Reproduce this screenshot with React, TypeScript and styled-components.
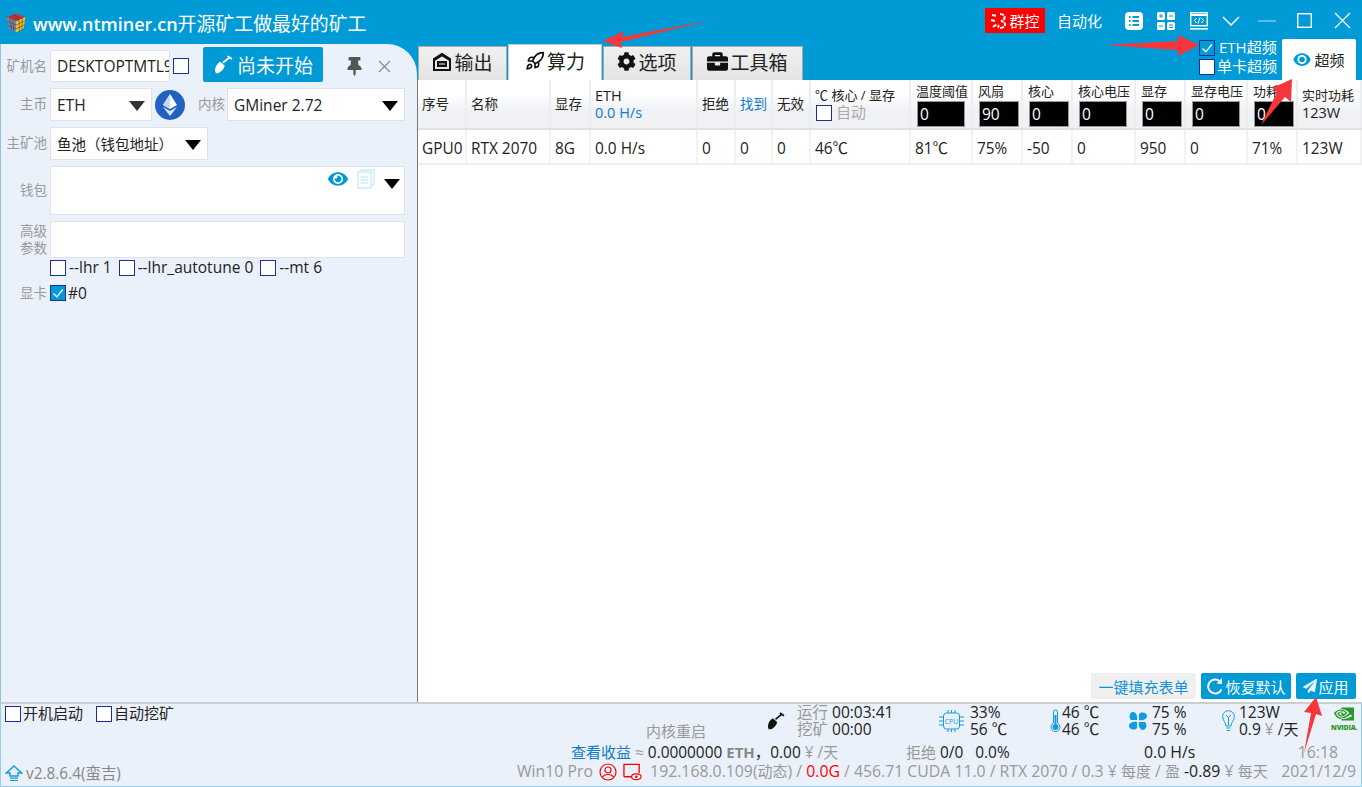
import React from "react"
import styled, { createGlobalStyle } from "styled-components"
import { FaBriefcase, FaCog, FaEye, FaPaperPlane, FaThumbtack } from "react-icons/fa"
import { SiNvidia } from "react-icons/si"
import { LuRocket } from "react-icons/lu"

const blue = "#009ad6"
const panel = "#eaf1fa"
const COLS = "49px 84px 40px 107px 38px 37px 38px 100px 62px 50px 50px 63px 50px 62px 50px 64px"

const Global = createGlobalStyle`
    html, body { margin: 0; padding: 0; height: 100%; overflow: hidden; }
    body { font-family: "Open Sans", "Noto Sans CJK SC", sans-serif; font-size: 14px; color: #222; }
    * { box-sizing: border-box; }
`

const Window = styled.div`
    position: relative;
    width: 1362px;
    height: 787px;
    background: ${blue};
    display: flex;
    flex-direction: column;
    overflow: hidden;
`

const TitleBar = styled.div`
    height: 44px;
    flex: none;
    display: flex;
    align-items: center;
    padding: 2px 11px 0 6px;
    color: #fff;
`

const Title = styled.div`
    margin-left: 7px;
    font-size: 18.9px;
    white-space: nowrap;
    b { font-weight: 600; font-size: 18px; }
`

const TitleTools = styled.div`
    margin-left: auto;
    display: flex;
    align-items: center;
    margin-top: -5px;
`

const GroupBtn = styled.div`
    width: 60px;
    height: 25px;
    background: #ff0000;
    font-size: 15px;
    display: flex;
    align-items: center;
    justify-content: center;
    gap: 1px;
`

const AutoLabel = styled.div`
    margin: 0 23px 0 12px;
    font-size: 15px;
`

const ToolIcon = styled.svg<{ $gap?: number }>`
    display: block;
    margin-right: ${p => p.$gap ?? 0}px;
    flex: none;
`

const Main = styled.div`
    flex: 1;
    display: flex;
    min-height: 0;
`

const Side = styled.div`
    width: 417px;
    flex: none;
    background: ${panel};
    border-top-right-radius: 30px;
    border-left: 1px solid #8fc4e0;
    padding: 4px 12px 0 0;
    display: flex;
    flex-direction: column;
`

const FormRow = styled.div<{ $top?: number }>`
    display: flex;
    align-items: center;
    margin-top: ${p => p.$top ?? 6}px;
`

const Label = styled.div`
    width: 46px;
    flex: none;
    margin-right: 3px;
    text-align: right;
    color: #999;
    font-size: 13.5px;
    line-height: 17px;
`

const InlineLabel = styled(Label)`
    width: 28px;
    margin: 0 2px 0 12px;
`

const Field = styled.div<{ $w?: number; $h?: number; $cjk?: boolean }>`
    position: relative;
    width: ${p => (p.$w ? `${p.$w}px` : "auto")};
    flex: ${p => (p.$w ? "none" : 1)};
    height: ${p => p.$h ?? 33}px;
    background: #fff;
    border: 1px solid #dfe3e8;
    display: flex;
    align-items: center;
    padding-left: 6px;
    font-size: ${p => (p.$cjk ? 14.5 : 15.5)}px;
    white-space: nowrap;
    overflow: hidden;
`

const Caret = styled.span<{ $gray?: boolean }>`
    position: absolute;
    right: 6px;
    top: 50%;
    margin-top: -4px;
    width: 0;
    height: 0;
    border-left: 8px solid transparent;
    border-right: 8px solid transparent;
    border-top: 10px solid ${p => (p.$gray ? "#333" : "#000")};
`

const Box = styled.span<{ $on?: boolean }>`
    width: 16px;
    height: 16px;
    flex: none;
    display: inline-flex;
    align-items: center;
    justify-content: center;
    background: ${p => (p.$on ? blue : "#fff")};
    border: 1px solid #1c2f9c;
`

const NameBox = styled(Box)`
    margin-left: 3px;
`

const Check = ({ on }: { on?: boolean }) => (
    <Box $on={on}>
        {on && (
            <svg width="12" height="12" viewBox="0 0 12 12">
                <path d="M1.5 6.5 L4.8 9.8 L10.8 2.5" fill="none" stroke="#fff" strokeWidth="1.3" />
            </svg>
        )}
    </Box>
)

const StartBtn = styled.div`
    width: 120px;
    height: 35px;
    margin-left: 14px;
    margin-top: -3px;
    background: ${blue};
    color: #fff;
    font-size: 19px;
    border-radius: 2px;
    display: flex;
    align-items: center;
    justify-content: center;
    gap: 4px;
`

const PinBtn = styled.div`
    margin-left: 22px;
    color: #555;
    display: flex;
    align-items: center;
`

const CloseSmall = styled.svg`
    margin-left: 14px;
    display: block;
`

const EthCircle = styled.div`
    width: 30px;
    height: 30px;
    margin-left: 3px;
    border-radius: 50%;
    background: #2261c4;
    display: flex;
    align-items: center;
    justify-content: center;
    flex: none;
`

const WalletTools = styled.div`
    position: absolute;
    right: 4px;
    top: 2px;
    display: flex;
    align-items: flex-start;
    gap: 9px;
`

const WalletCaret = styled.span`
    margin-top: 10px;
    width: 0;
    height: 0;
    border-left: 8px solid transparent;
    border-right: 8px solid transparent;
    border-top: 10px solid #000;
`

const Options = styled.div`
    display: flex;
    align-items: center;
    margin: 1px 0 0 49px;
    font-size: 15.5px;
    line-height: 17px;
    gap: 3px;
`

const OptGap = styled.span`
    width: 1px;
`

const CardName = styled.span`
    margin-left: 2px;
    font-size: 15.5px;
`

const Right = styled.div`
    flex: 1;
    display: flex;
    flex-direction: column;
    min-width: 0;
`

const TabBar = styled.div`
    position: relative;
    height: 36px;
    flex: none;
    display: flex;
    align-items: flex-end;
    padding-left: 1px;
`

const Tab = styled.div<{ $on?: boolean; $w: number }>`
    width: ${p => p.$w}px;
    height: ${p => (p.$on ? 36 : 34)}px;
    margin-right: 1px;
    padding-bottom: 4px;
    display: flex;
    align-items: center;
    justify-content: center;
    gap: 2px;
    font-size: 19px;
    color: #222;
    background: ${p => (p.$on ? "#fff" : "linear-gradient(#f0f0f0, #e4e4e4)")};
    border: 1px solid #aaa;
    border-bottom: 0;
    ${p => p.$on && "border-color: #c4ccd2;"}
`

const OcChecks = styled.div`
    position: absolute;
    right: 85px;
    top: -6px;
    color: #fff;
    font-size: 15px;
    line-height: 19px;
`

const OcRow = styled.div<{ $gap: number }>`
    display: flex;
    align-items: center;
    gap: ${p => p.$gap}px;
    height: 19px;
`

const OcButton = styled.div`
    position: absolute;
    right: 6px;
    top: -5px;
    width: 74px;
    height: 41px;
    background: #fff;
    border-radius: 2px 2px 0 0;
    display: flex;
    align-items: center;
    justify-content: center;
    gap: 3px;
    font-size: 15px;
`

const Content = styled.div`
    flex: 1;
    background: #fff;
    border-left: 1px solid #777;
    display: flex;
    flex-direction: column;
    min-height: 0;
`

const GridRow = styled.div<{ $head?: boolean }>`
    display: grid;
    grid-template-columns: ${COLS};
    height: ${p => (p.$head ? 50 : 35)}px;
    flex: none;
    background: ${p => (p.$head ? "linear-gradient(#ffffff 30%, #eff1f4 62%, #f0f1f3)" : "#fff")};
    border-bottom: ${p => (p.$head ? "2px solid #dfe1e3" : "2px solid #eceef0")};
`

const Cell = styled.div<{ $head?: boolean }>`
    padding-left: 4px;
    padding-top: ${p => (p.$head ? 0 : 4)}px;
    border-right: 2px solid ${p => (p.$head ? "#eceef1" : "#f1f2f4")};
    display: flex;
    flex-direction: column;
    justify-content: center;
    font-size: ${p => (p.$head ? 14.5 : 15.4)}px;
    line-height: 17px;
    white-space: nowrap;
    overflow: hidden;
    color: #222;
`

const HeadText = styled.span<{ $blue?: boolean; $small?: boolean }>`
    font-size: ${p => (p.$small ? 13 : 13.5)}px;
    color: ${p => (p.$blue ? "#0f7cc8" : "#222")};
`

const HashText = styled.span`
    font-size: 14.5px;
    color: #0f7cc8;
`

const BlackInput = styled.div<{ $w: number }>`
    width: ${p => p.$w}px;
    height: 26px;
    margin: 1px 0 3px 1px;
    background: #000;
    border: 1px solid #999;
    color: #fff;
    font-size: 15.5px;
    line-height: 24px;
    padding-left: 2px;
`

const InputCell = styled(Cell)`
    justify-content: flex-start;
    padding-top: 3px;
    padding-left: 5px;
`

const AutoRow = styled.div`
    display: flex;
    align-items: center;
    gap: 4px;
    color: #aaa;
    font-size: 15px;
    padding-left: 1px;
`

const Spacer = styled.div`
    flex: 1;
`

const Actions = styled.div`
    display: flex;
    justify-content: flex-end;
    gap: 5px;
    padding: 0 6px 3px 0;
`

const Action = styled.div<{ $plain?: boolean; $w: number }>`
    width: ${p => p.$w}px;
    height: 26px;
    border-radius: 2px;
    background: ${p => (p.$plain ? "#f0f0f0" : blue)};
    color: ${p => (p.$plain ? "#1493d4" : "#fff")};
    display: flex;
    align-items: center;
    justify-content: center;
    font-size: 15px;
    gap: 1px;
    white-space: nowrap;
`

const Footer = styled.div`
    height: 85px;
    flex: none;
    background: ${panel};
    border-top: 2px solid #c9ced3;
    border-left: 1px solid #8fd0ee;
    border-right: 1px solid #8fd0ee;
    border-bottom: 1px solid #8fd0ee;
    display: flex;
    font-size: 15.8px;
    line-height: 17px;
`

const FootLeft = styled.div`
    width: 516px;
    flex: none;
    display: flex;
    flex-direction: column;
    justify-content: space-between;
    padding: 1px 0 4px 4px;
`

const FootChecks = styled.div`
    display: flex;
    align-items: center;
    font-size: 15px;
    gap: 2px;
`

const FootCheckGap = styled.span`
    width: 9px;
`

const Version = styled.div`
    display: flex;
    align-items: center;
    color: #888;
    gap: 3px;
    font-size: 15.4px;
`

const FootRight = styled.div`
    flex: 1;
    display: flex;
    flex-direction: column;
    min-width: 0;
`

const StatRow = styled.div`
    height: 39px;
    display: flex;
    align-items: flex-start;
    font-size: 15.5px;
`

const Restart = styled.div`
    margin: 19px 0 0 129px;
    width: 120px;
    color: #999;
    font-size: 15px;
    line-height: 17px;
    white-space: nowrap;
`

const Stat = styled.div<{ $w: number; $gap: number }>`
    width: ${p => p.$w}px;
    flex: none;
    display: flex;
    align-items: center;
    gap: ${p => p.$gap}px;
    white-space: nowrap;
`

const TwoLines = styled.div`
    display: flex;
    flex-direction: column;
`

const Line = styled.div`
    height: 17px;
    line-height: 17px;
`

const Muted = styled.span`
    color: #999;
`

const Cjk = styled.span`
    font-size: 15px;
`

const TextRow = styled.div`
    display: flex;
    align-items: center;
    height: 19px;
    white-space: nowrap;
`

const Segment = styled.div<{ $w: number; $left?: number }>`
    width: ${p => p.$w}px;
    margin-left: ${p => p.$left ?? 0}px;
    flex: none;
    font-size: 15.4px;
    white-space: pre;
`

const Link = styled.span`
    color: #0f7cc8;
    font-size: 15px;
`

const Bold = styled.b`
    color: #888;
    font-weight: 700;
    font-size: 15px;
`

const Red = styled.span`
    color: #f00;
`

const Stamp = styled.span<{ $pad: number }>`
    margin-left: auto;
    padding-right: ${p => p.$pad}px;
    color: #999;
`

const HostIcon = styled.svg`
    margin: 0 6px;
    flex: none;
`

const Arrow = styled.svg`
    position: absolute;
    left: 0;
    top: 0;
    pointer-events: none;
`

const NvidiaMark = styled.div`
    display: flex;
    flex-direction: column;
    align-items: center;
    color: #2a9a27;
    font-size: 7px;
    font-weight: 800;
    line-height: 8px;
    letter-spacing: -0.2px;
`

const Shovel = ({ size = 18, color = "#fff" }: { size?: number; color?: string }) => (
    <svg width={size} height={size} viewBox="0 0 18 18">
        <path d="M9 7 L15 2" stroke={color} strokeWidth="1.6" fill="none" />
        <path d="M13.2 1 L17 3.6" stroke={color} strokeWidth="1.6" fill="none" />
        <path d="M6.6 6 L10.6 9.6 C9.6 13.5 6 16.6 2.6 16.4 C0.8 13.4 2.6 8 6.6 6 Z" fill={color} />
    </svg>
)

const Cube = () => (
    <svg width="20" height="20" viewBox="0 0 20 20">
        <path d="M0.5 4.5 L10 0.5 L19.5 4 L10 8.5 Z" fill="#c23a36" />
        <path d="M0.5 4.5 L10 8.5 L10 19.5 L3 16 Z" fill="#7d86a8" />
        <path d="M10 8.5 L19.5 4 L17.5 15.5 L10 19.5 Z" fill="#f3c02f" />
        <path d="M3.6 3.2 L13 7 M6.8 1.9 L16.2 5.6 M13 7 L13.4 17.8 M16.2 5.6 L15.8 16.5 M10 12 L18.8 8 M10 15.8 L18 12 M3.6 6 L5.8 17.2 M6.8 7.2 L7.8 18.2 M1.2 8.5 L10 12 M2 12.2 L10 15.8" stroke="#3a2c2a" strokeWidth="0.5" fill="none" />
    </svg>
)

const OcEye = () => (
    <svg width="18" height="15" viewBox="0 0 18 15">
        <path d="M0.3 7.5 C3.5 -1 14.5 -1 17.7 7.5 C14.5 16 3.5 16 0.3 7.5 Z" fill={blue} />
        <circle cx="9" cy="7.5" r="4.6" fill="#fff" />
        <circle cx="9" cy="7.5" r="2.8" fill={blue} />
    </svg>
)

const headers = ["序号", "名称", "显存"]
const rowCells = ["GPU0", "RTX 2070", "8G", "0.0 H/s", "0", "0", "0", "46℃", "81℃", "75%", "-50", "0", "950", "0", "71%", "123W"]
const inputs = [
    { label: "温度阈值", value: "0", w: 48 },
    { label: "风扇", value: "90", w: 40 },
    { label: "核心", value: "0", w: 40 },
    { label: "核心电压", value: "0", w: 48 },
    { label: "显存", value: "0", w: 40 },
    { label: "显存电压", value: "0", w: 48 },
    { label: "功耗", value: "0", w: 40 },
]

const App = () => {
    return (
        <Window>
            <Global />
            <TitleBar>
                <Cube />
                <Title><b>www.ntminer.cn</b>开源矿工做最好的矿工</Title>
                <TitleTools>
                    <GroupBtn>
                        <svg width="18" height="18" viewBox="0 0 18 18">
                            <path d="M2 3 L7 4 M1 8 L5 9 M3 15 L7 12 M10 2 C16 2 16 8 11 9 C17 10 16 16 10 16 C8 16 8 14 9 13" stroke="#fff" strokeWidth="2" fill="none" strokeDasharray="4 1" />
                        </svg>
                        群控
                    </GroupBtn>
                    <AutoLabel>自动化</AutoLabel>
                    <ToolIcon $gap={14} width="18" height="18" viewBox="0 0 18 18">
                        <rect width="18" height="18" rx="4" fill="#fff" />
                        <path d="M4 5 H5.5 M7.5 5 H14 M4 9 H5.5 M7.5 9 H14 M4 13 H5.5 M7.5 13 H14" stroke={blue} strokeWidth="1.8" />
                    </ToolIcon>
                    <ToolIcon $gap={15} width="18" height="18" viewBox="0 0 18 18">
                        <rect width="8" height="8" rx="1.5" fill="#fff" />
                        <rect x="10" width="8" height="8" rx="1.5" fill="#fff" />
                        <rect y="10" width="8" height="8" rx="1.5" fill="#fff" />
                        <rect x="10" y="10" width="8" height="8" rx="1.5" fill="#fff" />
                        <path d="M2 4 H6 M4 2 V6 M12 4 H16 M2 14 H6 M12 13 H16 M12 15.4 H16" stroke={blue} strokeWidth="1" />
                    </ToolIcon>
                    <ToolIcon $gap={14} width="18" height="18" viewBox="0 0 18 18">
                        <rect x="0.7" y="0.7" width="16.6" height="13" fill="none" stroke="#fff" strokeWidth="1.4" />
                        <rect y="2" width="18" height="2" fill="#fff" />
                        <path d="M0 16.8 H18" stroke="#fff" strokeWidth="1.6" />
                        <path d="M6.5 6 L4.5 8.5 L6.5 11 M11.5 6 L13.5 8.5 L11.5 11 M10 5.5 L8 11.5" stroke="#fff" fill="none" />
                    </ToolIcon>
                    <ToolIcon $gap={18} width="18" height="10" viewBox="0 0 18 10">
                        <path d="M1 1 L9 9 L17 1" stroke="#fff" strokeWidth="1.5" fill="none" />
                    </ToolIcon>
                    <ToolIcon $gap={21} width="18" height="2" viewBox="0 0 18 2">
                        <rect width="18" height="2" fill="#5fbce6" />
                    </ToolIcon>
                    <ToolIcon $gap={22} width="15" height="15" viewBox="0 0 15 15">
                        <rect x="0.7" y="0.7" width="13.6" height="13.6" fill="none" stroke="#fff" strokeWidth="1.4" />
                    </ToolIcon>
                    <ToolIcon width="17" height="17" viewBox="0 0 17 17">
                        <path d="M1 1 L16 16 M16 1 L1 16" stroke="#fff" strokeWidth="1.3" />
                    </ToolIcon>
                </TitleTools>
            </TitleBar>

            <Main>
                <Side>
                    <FormRow $top={2}>
                        <Label>矿机名</Label>
                        <Field $w={120} $h={32}>DESKTOPTMTL9</Field>
                        <NameBox />
                        <StartBtn><Shovel size={20} />尚未开始</StartBtn>
                        <PinBtn><FaThumbtack size={19} /></PinBtn>
                        <CloseSmall width="13" height="13" viewBox="0 0 13 13">
                            <path d="M1 1 L12 12 M12 1 L1 12" stroke="#888" strokeWidth="1.1" />
                        </CloseSmall>
                    </FormRow>
                    <FormRow>
                        <Label>主币</Label>
                        <Field $w={102}>ETH<Caret $gray /></Field>
                        <EthCircle>
                            <svg width="14" height="22" viewBox="0 0 14 22">
                                <path d="M7 0 L14 11 L7 15 L0 11 Z" fill="#fff" />
                                <path d="M0 13 L7 17 L14 13 L7 22 Z" fill="#dbe6fa" />
                                <path d="M7 0 L7 15 L0 11 Z" fill="#c6d8f7" />
                            </svg>
                        </EthCircle>
                        <InlineLabel>内核</InlineLabel>
                        <Field>GMiner 2.72<Caret /></Field>
                    </FormRow>
                    <FormRow>
                        <Label>主矿池</Label>
                        <Field $w={158} $cjk>鱼池（钱包地址）<Caret /></Field>
                    </FormRow>
                    <FormRow>
                        <Label>钱包</Label>
                        <Field $h={49}>
                            <WalletTools>
                                <FaEye size={20} color={blue} />
                                <svg width="18" height="20" viewBox="0 0 18 20">
                                    <rect x="4" y="1" width="13" height="15" fill="#fff" stroke="#b5e1f5" />
                                    <rect x="1" y="3" width="13" height="16" fill="#fff" stroke="#b5e1f5" />
                                    <path d="M3.5 8 H11.5 M3.5 11 H11.5 M3.5 14 H11.5" stroke="#b5e1f5" />
                                </svg>
                                <WalletCaret />
                            </WalletTools>
                        </Field>
                    </FormRow>
                    <FormRow>
                        <Label>高级<br />参数</Label>
                        <Field $h={37} />
                    </FormRow>
                    <Options>
                        <Check /><span>--lhr 1</span><OptGap />
                        <Check /><span>--lhr_autotune 0</span><OptGap />
                        <Check /><span>--mt 6</span>
                    </Options>
                    <FormRow $top={6}>
                        <Label>显卡</Label>
                        <Check on />
                        <CardName>#0</CardName>
                    </FormRow>
                </Side>

                <Right>
                    <TabBar>
                        <Tab $w={89}>
                            <svg width="20" height="20" viewBox="0 0 20 20">
                                <path d="M2 18 V7 L10 2 L18 7 V18 Z" fill="none" stroke="#111" strokeWidth="2" />
                                <path d="M2 8 L10 3 L18 8" fill="none" stroke="#111" strokeWidth="2.5" />
                                <rect x="5" y="9" width="10" height="6" fill="#111" />
                                <path d="M7 12 H13" stroke="#fff" />
                            </svg>
                            输出
                        </Tab>
                        <Tab $w={94} $on>
                            <LuRocket size={20} color="#111" />
                            算力
                        </Tab>
                        <Tab $w={88}>
                            <FaCog size={19} color="#111" />
                            选项
                        </Tab>
                        <Tab $w={111}>
                            <FaBriefcase size={21} color="#111" />
                            工具箱
                        </Tab>
                        <OcChecks>
                            <OcRow $gap={4}><Check on />ETH超频</OcRow>
                            <OcRow $gap={2}><Check />单卡超频</OcRow>
                        </OcChecks>
                        <OcButton>
                            <OcEye />
                            超频
                        </OcButton>
                    </TabBar>
                    <Content>
                        <GridRow $head>
                            {headers.map(h => (
                                <Cell $head key={h}><HeadText>{h}</HeadText></Cell>
                            ))}
                            <Cell $head>
                                <span>ETH</span>
                                <HashText>0.0 H/s</HashText>
                            </Cell>
                            <Cell $head><HeadText>拒绝</HeadText></Cell>
                            <Cell $head><HeadText $blue>找到</HeadText></Cell>
                            <Cell $head><HeadText>无效</HeadText></Cell>
                            <Cell $head>
                                <HeadText $small>℃ 核心 / 显存</HeadText>
                                <AutoRow><Check />自动</AutoRow>
                            </Cell>
                            {inputs.map(i => (
                                <InputCell $head key={i.label}>
                                    <HeadText $small>{i.label}</HeadText>
                                    <BlackInput $w={i.w}>{i.value}</BlackInput>
                                </InputCell>
                            ))}
                            <Cell $head>
                                <HeadText $small>实时功耗</HeadText>
                                <span>123W</span>
                            </Cell>
                        </GridRow>
                        <GridRow>
                            {rowCells.map((c, i) => <Cell key={i}>{c}</Cell>)}
                        </GridRow>
                        <Spacer />
                        <Actions>
                            <Action $plain $w={105}>一键填充表单</Action>
                            <Action $w={90}>
                                <svg width="18" height="18" viewBox="0 0 18 18">
                                    <path d="M13.8 4.2 A7 7 0 1 0 15.5 12.5" fill="none" stroke="#fff" strokeWidth="2" />
                                    <path d="M16 1 L16 7 L10.5 6.5 Z" fill="#fff" />
                                </svg>
                                恢复默认
                            </Action>
                            <Action $w={60}>
                                <FaPaperPlane size={14} color="#e6f5fc" />
                                应用
                            </Action>
                        </Actions>
                    </Content>
                </Right>
            </Main>

            <Footer>
                <FootLeft>
                    <FootChecks>
                        <Check /><span>开机启动</span><FootCheckGap />
                        <Check /><span>自动挖矿</span>
                    </FootChecks>
                    <Version>
                        <svg width="18" height="18" viewBox="0 0 18 18">
                            <path d="M9 2 L16.5 9 H13 V12 H5 V9 H1.5 Z" fill="none" stroke="#12a0e0" strokeWidth="1.5" />
                            <path d="M5 14.2 H13 M5 16.5 H13" stroke="#12a0e0" strokeWidth="1.2" />
                        </svg>
                        v2.8.6.4(蛮吉)
                    </Version>
                </FootLeft>
                <FootRight>
                    <StatRow>
                        <Restart>内核重启</Restart>
                        <Stat $w={173} $gap={12}>
                            <Shovel size={19} color="#111" />
                            <TwoLines>
                                <Line><Muted>运行</Muted> 00:03:41</Line>
                                <Line><Muted>挖矿</Muted> 00:00</Line>
                            </TwoLines>
                        </Stat>
                        <Stat $w={111} $gap={6}>
                            <svg width="25" height="22" viewBox="0 0 25 22">
                                <rect x="4.5" y="3" width="16" height="16" rx="3" fill="none" stroke="#139be0" />
                                <path d="M0 7 H4 M0 11 H4 M0 15 H4 M21 7 H25 M21 11 H25 M21 15 H25 M9 0 V3 M12.5 0 V3 M16 0 V3 M9 19 V22 M12.5 19 V22 M16 19 V22" stroke="#139be0" />
                                <text x="12.5" y="14" fontSize="7" textAnchor="middle" fill="#139be0">CPU</text>
                            </svg>
                            <TwoLines><Line>33%</Line><Line>56 ℃</Line></TwoLines>
                        </Stat>
                        <Stat $w={79} $gap={1}>
                            <svg width="11" height="24" viewBox="0 0 11 24">
                                <path d="M3.5 14 V3 A2 2 0 0 1 7.5 3 V14 A4.5 4.5 0 1 1 3.5 14 Z" fill="none" stroke="#139be0" />
                                <circle cx="5.5" cy="18" r="3" fill="#139be0" />
                                <path d="M5.5 6 V16" stroke="#139be0" strokeWidth="2" />
                            </svg>
                            <TwoLines><Line>46 ℃</Line><Line>46 ℃</Line></TwoLines>
                        </Stat>
                        <Stat $w={93} $gap={5}>
                            <svg width="18" height="18" viewBox="0 0 18 18">
                                <path d="M8 8 L2 8 C-1 5 1 0 4 0 C7 0 9 4 8 8 Z M10 8 L10 2 C13 -1 18 1 18 4 C18 7 14 9 10 8 Z M10 10 L16 10 C19 13 17 18 14 18 C11 18 9 14 10 10 Z M8 10 L8 16 C5 19 0 17 0 14 C0 11 4 9 8 10 Z" fill="#139be0" />
                            </svg>
                            <TwoLines><Line>75 %</Line><Line>75 %</Line></TwoLines>
                        </Stat>
                        <Stat $w={109} $gap={4}>
                            <svg width="13" height="22" viewBox="0 0 13 22">
                                <path d="M4 16 C4 12 0.7 11 0.7 6.5 A5.8 5.8 0 0 1 12.3 6.5 C12.3 11 9 12 9 16 Z" fill="none" stroke="#139be0" />
                                <path d="M4.5 18 H8.5 M5 20.5 H8 M4 5 L6.5 7.5 L9 5 M6.5 7.5 V15" stroke="#139be0" fill="none" />
                            </svg>
                            <TwoLines>
                                <Line>123W</Line>
                                <Line>0.9 <Muted>¥</Muted> /<Cjk>天</Cjk></Line>
                            </TwoLines>
                        </Stat>
                        <NvidiaMark>
                            <SiNvidia size={20} />
                            NVIDIA.
                        </NvidiaMark>
                    </StatRow>
                    <TextRow>
                        <Segment $left={54} $w={335}>
                            <Link>查看收益</Link> <Muted>≈</Muted> 0.0000000 <Bold>ETH</Bold>，0.00 <Muted>¥ /</Muted><Muted><Cjk>天</Cjk></Muted>
                        </Segment>
                        <Segment $w={238}>
                            <Muted><Cjk>拒绝</Cjk></Muted> 0/0   0.0%
                        </Segment>
                        <span>0.0 H/s</span>
                        <Stamp $pad={23}>16:18</Stamp>
                    </TextRow>
                    <TextRow>
                        <Muted>Win10 Pro</Muted>
                        <HostIcon width="18" height="18" viewBox="0 0 18 18">
                            <circle cx="9" cy="9" r="8" fill="none" stroke="#f00" strokeWidth="1.2" />
                            <circle cx="9" cy="7" r="3" fill="none" stroke="#f00" strokeWidth="1.2" />
                            <path d="M3.5 14.5 C5 10.5 13 10.5 14.5 14.5" fill="none" stroke="#f00" strokeWidth="1.2" />
                        </HostIcon>
                        <svg width="19" height="18" viewBox="0 0 20 18">
                            <path d="M9 14 H2 A1 1 0 0 1 1 13 V1 H17 V10" fill="none" stroke="#f00" strokeWidth="1.4" />
                            <ellipse cx="14" cy="14" rx="5" ry="3" fill="none" stroke="#f00" strokeWidth="1.2" />
                            <circle cx="14" cy="14" r="1.3" fill="#f00" />
                        </svg>
                        <Muted>&nbsp;&nbsp;192.168.0.109(<Cjk>动态</Cjk>) /&nbsp;</Muted>
                        <Red>0.0G&nbsp;</Red>
                        <Muted>/ 456.71 CUDA 11.0 / RTX 2070 / 0.3 ¥ <Cjk>每度</Cjk> / <Cjk>盈</Cjk>&nbsp;</Muted>
                        -0.89 <Muted>&nbsp;¥ <Cjk>每天</Cjk></Muted>
                        <Stamp $pad={5}>2021/12/9</Stamp>
                    </TextRow>
                </FootRight>
            </Footer>

            <Arrow width="1362" height="787" viewBox="0 0 1362 787">
                <path d="M711 20 L622 37 L624 31 L603 41 L622 48 L621 42 Z" fill="#f7363c" />
                <path d="M1105 45 L1178 41 L1178 35 L1199 45 L1178 56 L1178 50 Z" fill="#f7363c" />
                <path d="M1261 125 L1277 92 L1272 88 L1292 79 L1291 102 L1285 97 Z" fill="#f7363c" />
                <path d="M1304 753 L1311 713 L1304 712 L1316 697 L1322 716 L1316 714 Z" fill="#f7363c" />
            </Arrow>
        </Window>
    )
}

export default App
